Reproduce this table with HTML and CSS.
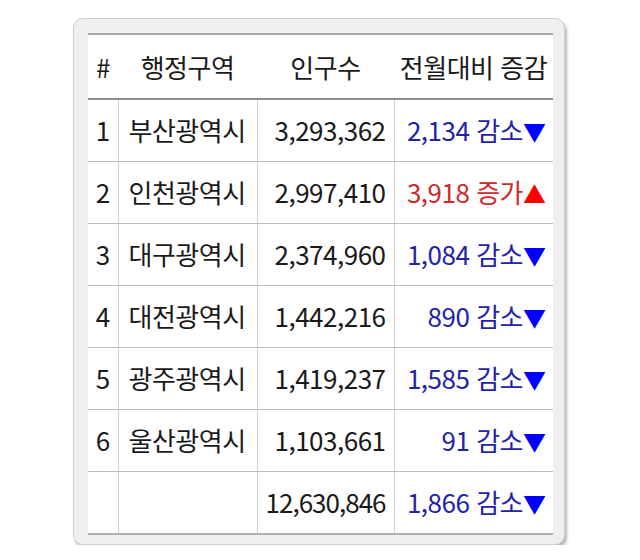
FILE: index.html
```html
<!DOCTYPE html>
<html lang="ko">
<head>
<meta charset="utf-8">
<link rel="stylesheet" href="styles.css">
</head>
<body>
<div class="card">
  <table class="pop">
    <colgroup>
      <col class="w-no"><col class="w-name"><col class="w-num"><col class="w-chg">
    </colgroup>
    <thead>
      <tr><th class="c-no">#</th><th class="c-name">행정구역</th><th class="c-num">인구수</th><th class="c-chg">전월대비 증감</th></tr>
    </thead>
    <tbody>
      <tr><td class="c-no">1</td><td class="c-name">부산광역시</td><td class="c-num">3,293,362</td><td class="c-chg down">2,134 감소<span class="tri">▼</span></td></tr>
      <tr><td class="c-no">2</td><td class="c-name">인천광역시</td><td class="c-num">2,997,410</td><td class="c-chg up">3,918 증가<span class="tri">▲</span></td></tr>
      <tr><td class="c-no">3</td><td class="c-name">대구광역시</td><td class="c-num">2,374,960</td><td class="c-chg down">1,084 감소<span class="tri">▼</span></td></tr>
      <tr><td class="c-no">4</td><td class="c-name">대전광역시</td><td class="c-num">1,442,216</td><td class="c-chg down">890 감소<span class="tri">▼</span></td></tr>
      <tr><td class="c-no">5</td><td class="c-name">광주광역시</td><td class="c-num">1,419,237</td><td class="c-chg down">1,585 감소<span class="tri">▼</span></td></tr>
      <tr><td class="c-no">6</td><td class="c-name">울산광역시</td><td class="c-num">1,103,661</td><td class="c-chg down">91 감소<span class="tri">▼</span></td></tr>
      <tr class="total"><td class="c-no"></td><td class="c-name"></td><td class="c-num">12,630,846</td><td class="c-chg down">1,866 감소<span class="tri">▼</span></td></tr>
    </tbody>
  </table>
</div>
</body>
</html>
```
FILE: styles.css
```css
html, body {
  margin: 0;
  padding: 0;
  background: #ffffff;
}
body {
  padding: 18px 0 0 73px;
  font-family: "Noto Sans CJK KR", "Noto Sans", sans-serif;
  color: #1a1a1a;
}
.card {
  width: 492px;
  height: 527px;
  box-sizing: border-box;
  padding: 14px 12px 12px 14px;
  background: #efefef;
  border: 1px solid #cfcfcf;
  border-radius: 10px;
  box-shadow: 2px 3px 3px rgba(0, 0, 0, 0.28);
}
.pop {
  width: 465px;
  table-layout: fixed;
  border-collapse: collapse;
  background: #fff;
  font-size: 26px;
  line-height: 36px;
  letter-spacing: -0.5px;
}
.w-no { width: 30px; }
.w-name { width: 139px; }
.w-num { width: 137px; }
.w-chg { width: 159px; }
.pop th, .pop td {
  height: 36px;
  padding: 12px 7px 13px;
  border-left: 1px solid #d0d0d0;
  border-bottom: 1px solid #bdbdbd;
  white-space: nowrap;
  font-weight: 400;
}
.pop th:first-child, .pop td:first-child {
  border-left: none;
}
.pop thead th {
  border-top: 2px solid #a8a8a8;
  border-bottom: 2px solid #8f8f8f;
  border-left: none;
  padding: 14px 0 13px;
}
.pop tbody tr:last-child td {
  border-bottom: 2px solid #b0b0b0;
}
.c-no { text-align: center; }
.pop td.c-no { padding: 12px 0 13px; }
.c-name { text-align: center; }
.pop td.c-name { text-align: left; padding-left: 10px; }
.c-num { text-align: right; }
.pop td.c-num { padding-left: 0; padding-right: 8px; }
.pop .total td.c-num { letter-spacing: -1px; }
.pop th.c-num { text-align: center; }
.c-chg { text-align: right; }
.pop th.c-chg { text-align: center; }
.down { color: #2323a8; }
.up { color: #cf2a2a; }
.down .tri { color: #0000ff; }
.up .tri { color: #ff0000; }
.tri { font-size: 23px; line-height: 20px; letter-spacing: 0; }
```
